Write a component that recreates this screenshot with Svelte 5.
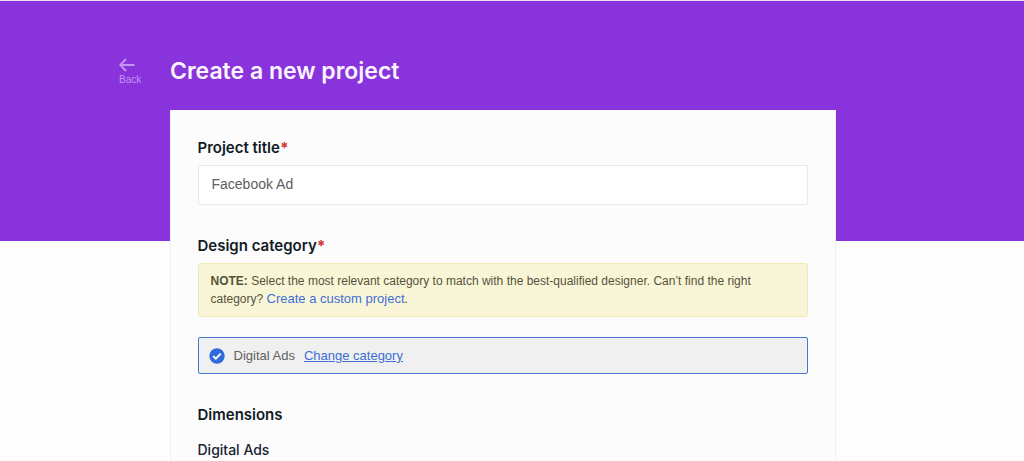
<script>
  let title = $state('Facebook Ad');
</script>

<div class="page">
  <header class="hero">
    <div class="bar">
      <a class="back" href="#back">
        <svg width="16" height="14" viewBox="0 0 16 14" fill="none" stroke="currentColor" stroke-width="1.8" aria-hidden="true">
          <path d="M7 1 1.2 7 7 13M1.2 7H15.5" />
        </svg>
        <span>Back</span>
      </a>
      <h1>Create a new project</h1>
    </div>
  </header>

  <main>
    <div class="card">
      <section>
        <label class="heading" for="title">Project title<span class="required">*</span></label>
        <input id="title" class="field" type="text" bind:value={title} required />
      </section>

      <section>
        <h2 class="heading">Design category<span class="required">*</span></h2>
        <p class="note">
          <strong>NOTE:</strong> Select the most relevant category to match with the best-qualified designer. Can’t find the right category? <a href="#custom">Create a custom project</a>.
        </p>
        <div class="selected">
          <svg width="16" height="16" viewBox="0 0 16 16" aria-hidden="true">
            <circle cx="8" cy="8" r="7.7" fill="#2f6bdc" />
            <path d="m4.2 8.1 2.6 2.5 5-5" fill="none" stroke="#fff" stroke-width="2" />
          </svg>
          <span>Digital Ads</span>
          <a href="#change">Change category</a>
        </div>
      </section>

      <section>
        <h2 class="heading">Dimensions</h2>
        <h3>Digital Ads</h3>
      </section>
    </div>
  </main>
</div>

<style>
  :global(body) {
    background: #fdfdfd;
    overflow: hidden;
  }
  .page {
    font-family: "Liberation Sans", Arial, sans-serif;
    color: #606060;
  }
  h1, h2, h3, p {
    margin: 0;
  }
  .hero {
    background: #8833dc;
    border-top: 1px solid #e9dcf5;
    padding: 54px 19px 132px 0;
  }
  .bar {
    display: grid;
    grid-template-columns: 51px 1fr;
    max-width: 716px;
    margin: 0 auto;
    padding-right: 51px;
    height: 54px;
  }
  .back {
    display: flex;
    flex-direction: column;
    gap: 2px;
    padding-top: 3px;
    color: #c597f1;
    font-size: 10px;
    line-height: 12px;
    text-decoration: none;
  }
  h1 {
    color: #fcf5ff;
    font: 600 23px/32px Inter, sans-serif;
  }
  main {
    margin-top: -131px;
    padding-right: 19px;
  }
  .card {
    box-sizing: border-box;
    max-width: 666px;
    margin: 0 auto;
    padding: 27px;
    background: #fcfcfc;
    border: 1px solid #f1f1f1;
    border-top-color: #fcfcfc;
    display: flex;
    flex-direction: column;
    gap: 31px;
  }
  .heading {
    display: block;
    margin-bottom: 8px;
    color: #101b25;
    font: 600 15px/19px Inter, sans-serif;
  }
  .required {
    color: #d23c38;
    font-weight: 800;
  }
  .field {
    box-sizing: border-box;
    display: block;
    width: 100%;
    height: 40px;
    padding: 0 13px 2px;
    border: 1px solid #e8e8e8;
    border-radius: 2px;
    background: #fff;
    color: #606060;
    font: 14px "Liberation Sans", Arial, sans-serif;
  }
  .note {
    padding: 8px 12px;
    border: 1px solid #f1eab8;
    border-radius: 3px;
    background: #f9f6d8;
    color: #56523a;
    font-size: 12px;
    line-height: 18px;
  }
  .note a {
    color: #3d6fd6;
    font-size: 13px;
    text-decoration: none;
  }
  .selected {
    display: flex;
    align-items: center;
    gap: 9px;
    margin-top: 20px;
    padding: 8px 10px;
    border: 1px solid #4577cc;
    border-radius: 2px;
    background: #f0f0f0;
    font-size: 13px;
    line-height: 19px;
  }
  .selected a {
    color: #3d6fd6;
  }
  h3 {
    padding-top: 8px;
    color: #182430;
    font: 500 14px/20px Inter, sans-serif;
  }
</style>
